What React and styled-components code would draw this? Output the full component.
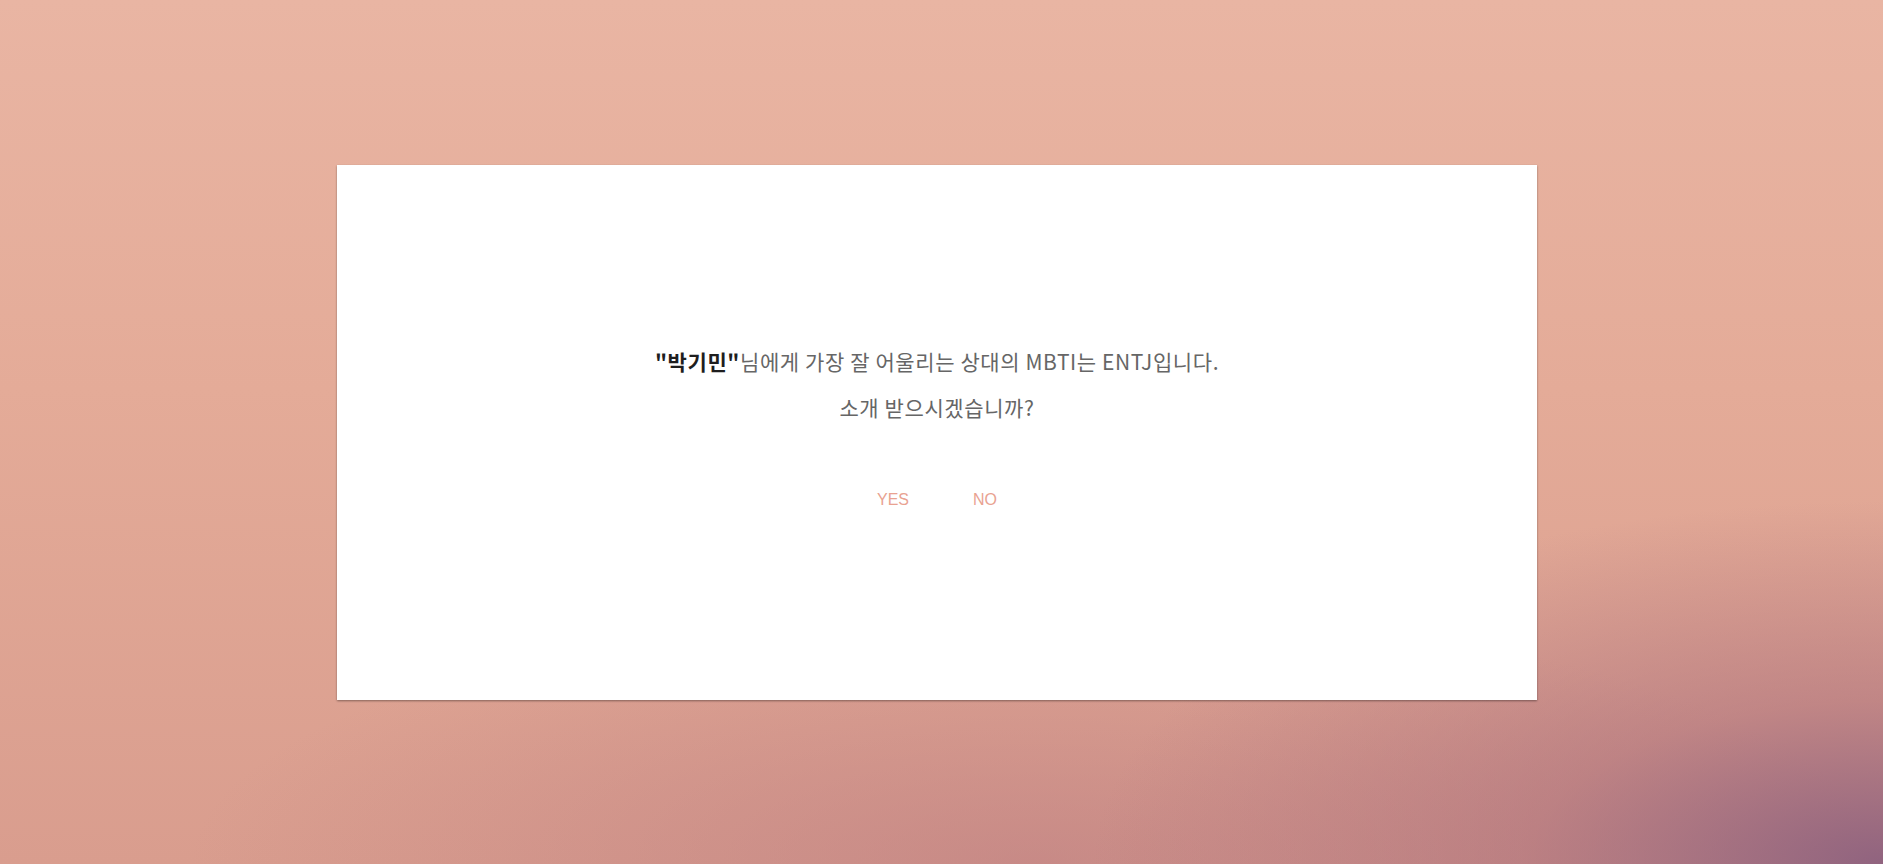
import React from "react";
import styled, { createGlobalStyle } from "styled-components";

const GlobalStyle = createGlobalStyle`
  html, body { margin: 0; padding: 0; }
  body {
    font-family: "Noto Sans CJK KR", "Noto Sans", sans-serif;
  }
`;

const Page = styled.div`
  width: 100%;
  height: 864px;
  box-sizing: border-box;
  padding-right: 9px;
  display: flex;
  align-items: center;
  justify-content: center;
  background:
    radial-gradient(ellipse 42% 42% at 100% 100%, rgba(140, 96, 126, 0.95) 0%, rgba(165, 106, 122, 0.5) 45%, rgba(200, 130, 130, 0) 100%),
    radial-gradient(ellipse 45% 30% at 55% 100%, rgba(185, 122, 128, 0.55) 0%, rgba(190, 125, 128, 0) 100%),
    linear-gradient(180deg, #e9b5a3 0%, #e4ab98 45%, #d99d8e 100%);
`;

const Card = styled.section`
  width: 1200px;
  height: 535px;
  box-sizing: border-box;
  padding-bottom: 16px;
  background: #ffffff;
  box-shadow: 0 1px 2px rgba(0, 0, 0, 0.4);
  display: flex;
  flex-direction: column;
  align-items: center;
  justify-content: center;
`;

const Message = styled.p`
  margin: 0;
  font-size: 21px;
  letter-spacing: 0.6px;
  line-height: 46px;
  color: #666666;
  text-align: center;
`;

const Name = styled.strong`
  color: #1e1e1e;
  font-weight: 700;
`;

const Actions = styled.div`
  margin-top: 60px;
  display: flex;
`;

const Choice = styled.button`
  border: none;
  background: transparent;
  padding: 0 32px;
  font-family: "Liberation Sans", Arial, sans-serif;
  font-size: 16px;
  line-height: 20px;
  color: #e9a291;
  cursor: pointer;
`;

export default function App() {
  return (
    <>
      <GlobalStyle />
      <Page>
        <Card>
          <Message>
            <Name>"박기민"</Name>님에게 가장 잘 어울리는 상대의 MBTI는 ENTJ입니다.
            <br />
            소개 받으시겠습니까?
          </Message>
          <Actions>
            <Choice>YES</Choice>
            <Choice>NO</Choice>
          </Actions>
        </Card>
      </Page>
    </>
  );
}
